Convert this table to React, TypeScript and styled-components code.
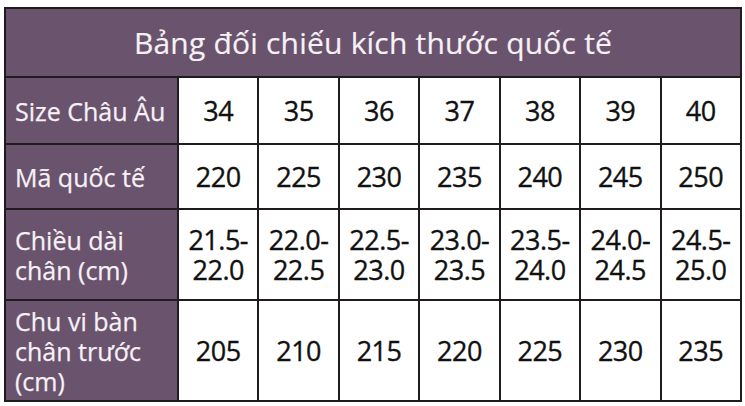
import React from "react";
import styled, { createGlobalStyle } from "styled-components";

const GlobalStyle = createGlobalStyle`
  html, body {
    margin: 0;
    padding: 0;
    background: #ffffff;
  }
  body {
    font-family: "Open Sans", "Noto Sans", sans-serif;
  }
`;

const rows: { label: string[]; values: string[][] }[] = [
  { label: ["Size Châu Âu"], values: ["34", "35", "36", "37", "38", "39", "40"].map((v) => [v]) },
  { label: ["Mã quốc tế"], values: ["220", "225", "230", "235", "240", "245", "250"].map((v) => [v]) },
  {
    label: ["Chiều dài", "chân (cm)"],
    values: [
      ["21.5-", "22.0"],
      ["22.0-", "22.5"],
      ["22.5-", "23.0"],
      ["23.0-", "23.5"],
      ["23.5-", "24.0"],
      ["24.0-", "24.5"],
      ["24.5-", "25.0"],
    ],
  },
  {
    label: ["Chu vi bàn", "chân trước", "(cm)"],
    values: ["205", "210", "215", "220", "225", "230", "235"].map((v) => [v]),
  },
];

const rowHeights = [67, 65, 91, 101];

export default function App() {
  return (
    <Page>
      <GlobalStyle />
      <SizeTable>
        <colgroup>
          <col style={{ width: 173 }} />
          {rows[0].values.map((_, i) => (
            <col key={i} />
          ))}
        </colgroup>
        <tbody>
          <tr>
            <Title colSpan={8}>Bảng đối chiếu kích thước quốc tế</Title>
          </tr>
          {rows.map((row, r) => (
            <Row key={r} h={rowHeights[r]}>
              <Label>
                {row.label.map((line, i) => (
                  <div key={i}>{line}</div>
                ))}
              </Label>
              {row.values.map((val, i) => (
                <Value key={i}>
                  {val.map((line, j) => (
                    <div key={j}>{line}</div>
                  ))}
                </Value>
              ))}
            </Row>
          ))}
        </tbody>
      </SizeTable>
    </Page>
  );
}

const Page = styled.div`
  padding: 7px 3px 0 4px;
  width: 745px;
  box-sizing: border-box;
`;

const SizeTable = styled.table`
  width: 738px;
  border-collapse: collapse;
  table-layout: fixed;
  border: 2px solid #1f1b1f;
`;

const Title = styled.td`
  height: 67px;
  padding: 0;
  background: #6a536c;
  color: #f6f1f6;
  font-size: 30px;
  line-height: 40px;
  text-align: center;
  border: 2px solid #1f1b1f;
  letter-spacing: 0.2px;
  -webkit-text-stroke: 0.2px #f6f1f6;
`;

const Row = styled.tr<{ h: number }>`
  height: ${(p) => p.h}px;
`;

const Label = styled.td`
  padding: 0 2px 0 9px;
  background: #6a536c;
  color: #f6f1f6;
  font-size: 25px;
  line-height: 30px;
  border: 2px solid #1f1b1f;
  vertical-align: middle;
  white-space: nowrap;
  -webkit-text-stroke: 0.25px #f6f1f6;
`;

const Value = styled.td`
  padding: 0;
  background: #ffffff;
  color: #111111;
  font-size: 27px;
  line-height: 30px;
  text-align: center;
  border: 2px solid #1f1b1f;
  vertical-align: middle;
  letter-spacing: -0.5px;
  -webkit-text-stroke: 0.35px #111111;
`;
